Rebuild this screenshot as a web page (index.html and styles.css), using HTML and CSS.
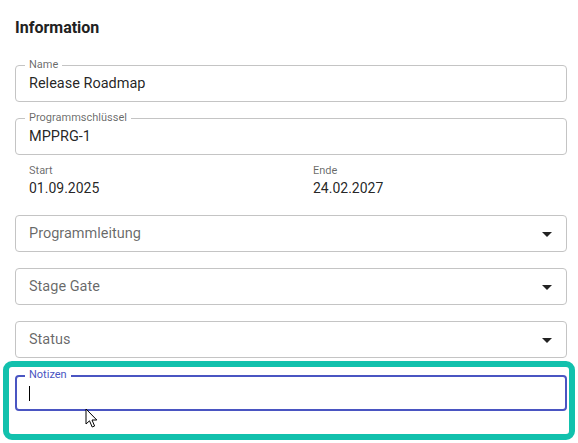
FILE: index.html
```html
<!DOCTYPE html>
<html lang="de">
<head>
<meta charset="utf-8">
<link rel="stylesheet" href="styles.css">
</head>
<body>
<div class="panel">
  <h2 class="title">Information</h2>

  <div class="field">
    <span class="legend">Name</span>
    <span class="value">Release Roadmap</span>
  </div>

  <div class="field">
    <span class="legend">Programmschlüssel</span>
    <span class="value">MPPRG-1</span>
  </div>

  <div class="dates">
    <div class="date">
      <div class="date-label">Start</div>
      <div class="date-value">01.09.2025</div>
    </div>
    <div class="date">
      <div class="date-label">Ende</div>
      <div class="date-value">24.02.2027</div>
    </div>
  </div>

  <div class="field select">
    <span class="placeholder">Programmleitung</span>
    <svg class="arrow" viewBox="0 0 24 24" width="24" height="24"><path d="M7 10l5 5 5-5z"/></svg>
  </div>

  <div class="field select">
    <span class="placeholder">Stage Gate</span>
    <svg class="arrow" viewBox="0 0 24 24" width="24" height="24"><path d="M7 10l5 5 5-5z"/></svg>
  </div>

  <div class="field select">
    <span class="placeholder">Status</span>
    <svg class="arrow" viewBox="0 0 24 24" width="24" height="24"><path d="M7 10l5 5 5-5z"/></svg>
  </div>

  <div class="highlight">
    <div class="field focused">
      <span class="legend">Notizen</span>
      <span class="caret"></span>
    </div>
    <svg class="cursor" viewBox="0 0 14 22" width="14" height="22"><path d="M1 1 L1 16 L4.5 12.8 L7.2 19 L9.6 18 L7 12 L11.8 12 Z" fill="#fff" stroke="#000" stroke-width="1" stroke-linejoin="miter"/></svg>
  </div>
</div>
</body>
</html>
```

FILE: styles.css
```css
html, body {
  margin: 0;
  padding: 0;
  background: #ffffff;
}

body {
  font-family: Roboto, "Noto Sans", "Liberation Sans", sans-serif;
  color: rgba(0, 0, 0, 0.87);
}

.panel {
  padding: 15px 11px 0 15px;
  display: flex;
  flex-direction: column;
}

.title {
  margin: 1px 0 25px 0;
  font-size: 16px;
  line-height: 24px;
  font-weight: 700;
  color: #212121;
}

.field {
  position: relative;
  box-sizing: border-box;
  height: 37px;
  border: 1px solid #c4c4c4;
  border-radius: 4px;
  display: flex;
  align-items: center;
  padding: 0 13px;
  margin-bottom: 16px;
}

.legend {
  position: absolute;
  top: -7px;
  left: 9px;
  padding: 0 4px;
  background: #ffffff;
  font-size: 11px;
  line-height: 12px;
  color: rgba(0, 0, 0, 0.6);
}

.value {
  font-size: 14.5px;
  color: rgba(0, 0, 0, 0.87);
}

.dates {
  display: grid;
  grid-template-columns: 284px 1fr;
  padding: 0 14px;
  margin-top: -7px;
  margin-bottom: 17px;
}

.date-label {
  font-size: 11px;
  line-height: 14px;
  color: rgba(0, 0, 0, 0.6);
}

.date-value {
  font-size: 14px;
  line-height: 20px;
  color: rgba(0, 0, 0, 0.87);
}

.select {
  justify-content: space-between;
  padding-right: 7px;
}

.placeholder {
  font-size: 14.5px;
  color: rgba(0, 0, 0, 0.6);
}

.arrow {
  fill: #222222;
  display: block;
}

.highlight {
  position: relative;
  margin: -13px -8px 0 -12px;
  border: 6px solid #12c1ad;
  border-radius: 9px;
  padding: 8px 2px 23px 6px;
}

.focused {
  height: 36px;
  margin-bottom: 0;
  border: 2px solid #4a55c2;
  padding: 0 12px;
}

.focused .legend {
  top: -8px;
  left: 8px;
  color: #4a55c2;
}

.caret {
  width: 1px;
  height: 15px;
  background: #000000;
}

.cursor {
  position: absolute;
  left: 76px;
  top: 41px;
}
```
